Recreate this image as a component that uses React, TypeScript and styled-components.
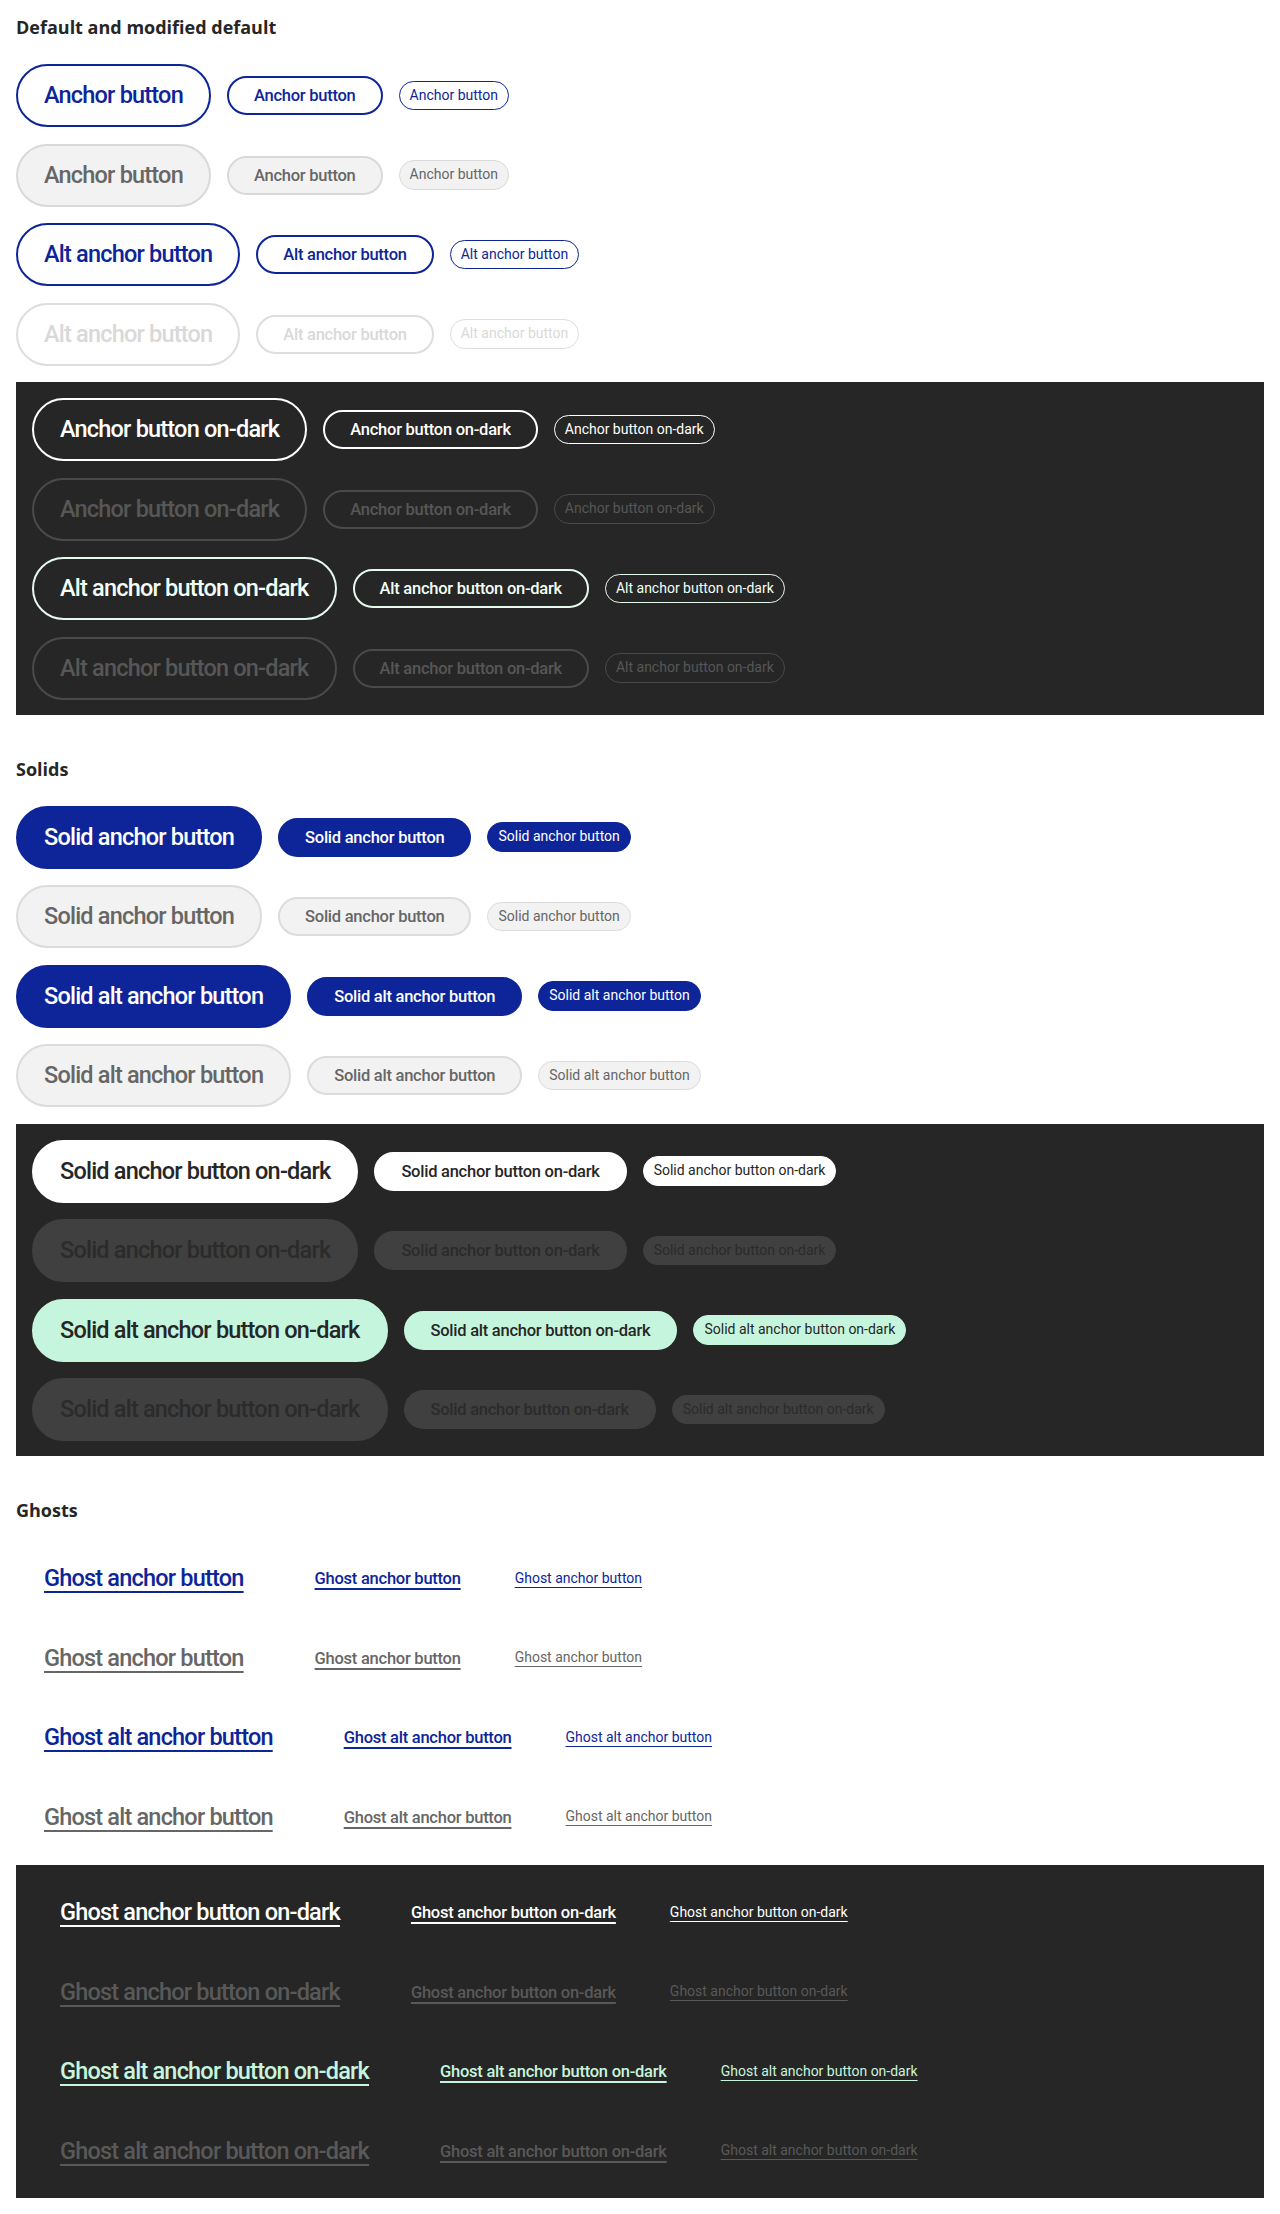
import React from 'react';
import styled, { createGlobalStyle, css } from 'styled-components';

type Size = 'lg' | 'md' | 'sm';

interface Tone {
  fg: string;
  bg: string;
  line: string;
  ghost?: boolean;
}

interface RowSpec {
  tone: Tone;
  labels: [string, string, string];
}

interface SectionSpec {
  title: string;
  light: RowSpec[];
  dark: RowSpec[];
}

const BLUE = '#0d2598';
const MINT = '#c6f5dd';

const GlobalStyle = createGlobalStyle`
  body {
    margin: 0;
    background: #ffffff;
    font-family: Roboto, "Liberation Sans", Arial, sans-serif;
  }
`;

const Page = styled.main`
  padding: 15px 16px 18px;
`;

const Section = styled.section`
  margin-bottom: 42px;

  &:last-child {
    margin-bottom: 0;
  }
`;

const Heading = styled.h2`
  margin: 0 0 24.5px;
  font-family: "Open Sans", "Noto Sans", sans-serif;
  font-size: 18px;
  font-weight: 700;
  line-height: 24.5px;
  color: #262626;
`;

const Stack = styled.div`
  display: flex;
  flex-direction: column;
  gap: 16.5px;
  margin-bottom: 16.5px;
`;

const DarkPanel = styled.div`
  display: flex;
  flex-direction: column;
  gap: 16.5px;
  padding: 16px 16px 15px;
  background: #262626;
`;

const Row = styled.div`
  display: flex;
  align-items: center;
  gap: 16px;
`;

const sizes = {
  lg: css`
    padding: 14px 26px;
    border-width: 2px;
    font-size: 23.5px;
    font-weight: 500;
    letter-spacing: -0.8px;
    line-height: 31px;
    text-decoration-thickness: 2px;
    text-underline-offset: 5px;
  `,
  md: css`
    padding: 6px 25px;
    border-width: 2px;
    font-size: 16.5px;
    font-weight: 500;
    letter-spacing: -0.25px;
    line-height: 23px;
    text-decoration-thickness: 1.5px;
    text-underline-offset: 4px;
  `,
  sm: css`
    padding: 4px 10px;
    border-width: 1.5px;
    font-size: 14px;
    font-weight: 400;
    letter-spacing: 0;
    line-height: 19.5px;
    text-decoration-thickness: 1px;
    text-underline-offset: 4px;
  `,
};

const Button = styled.a<{ $size: Size; $tone: Tone }>`
  display: inline-block;
  flex: none;
  border-style: solid;
  border-radius: 999px;
  font-family: Roboto, "Liberation Sans", Arial, sans-serif;
  white-space: nowrap;
  cursor: pointer;
  ${({ $size }) => sizes[$size]}
  color: ${({ $tone }) => $tone.fg};
  background: ${({ $tone }) => $tone.bg};
  border-color: ${({ $tone }) => $tone.line};
  text-decoration-line: ${({ $tone }) => ($tone.ghost ? 'underline' : 'none')};
`;

const outline = (fg: string, line: string, bg = 'transparent'): Tone => ({ fg, bg, line });
const solid = (fg: string, bg: string, line = bg): Tone => ({ fg, bg, line });
const ghost = (fg: string): Tone => ({ fg, bg: 'transparent', line: 'transparent', ghost: true });

const same = (label: string): [string, string, string] => [label, label, label];

const sections: SectionSpec[] = [
  {
    title: 'Default and modified default',
    light: [
      { tone: outline(BLUE, BLUE, '#ffffff'), labels: same('Anchor button') },
      { tone: outline('#666666', '#d9d9d9', '#f2f2f2'), labels: same('Anchor button') },
      { tone: outline(BLUE, BLUE, '#ffffff'), labels: same('Alt anchor button') },
      { tone: outline('#d9d9d9', '#dedede', '#ffffff'), labels: same('Alt anchor button') },
    ],
    dark: [
      { tone: outline('#ffffff', '#ffffff'), labels: same('Anchor button on-dark') },
      { tone: outline('#575757', '#4a4a4a'), labels: same('Anchor button on-dark') },
      { tone: outline('#f2fff7', '#e6f9ed'), labels: same('Alt anchor button on-dark') },
      { tone: outline('#575757', '#4a4a4a'), labels: same('Alt anchor button on-dark') },
    ],
  },
  {
    title: 'Solids',
    light: [
      { tone: solid('#ffffff', BLUE), labels: same('Solid anchor button') },
      { tone: solid('#666666', '#f2f2f2', '#dcdcdc'), labels: same('Solid anchor button') },
      { tone: solid('#ffffff', BLUE), labels: same('Solid alt anchor button') },
      { tone: solid('#666666', '#f2f2f2', '#dcdcdc'), labels: same('Solid alt anchor button') },
    ],
    dark: [
      { tone: solid('#262626', '#ffffff'), labels: same('Solid anchor button on-dark') },
      { tone: solid('#2b2b2b', '#404040'), labels: same('Solid anchor button on-dark') },
      { tone: solid('#262626', MINT), labels: same('Solid alt anchor button on-dark') },
      {
        tone: solid('#2b2b2b', '#404040'),
        labels: [
          'Solid alt anchor button on-dark',
          'Solid anchor button on-dark',
          'Solid alt anchor button on-dark',
        ],
      },
    ],
  },
  {
    title: 'Ghosts',
    light: [
      { tone: ghost(BLUE), labels: same('Ghost anchor button') },
      { tone: ghost('#666666'), labels: same('Ghost anchor button') },
      { tone: ghost(BLUE), labels: same('Ghost alt anchor button') },
      { tone: ghost('#666666'), labels: same('Ghost alt anchor button') },
    ],
    dark: [
      { tone: ghost('#ffffff'), labels: same('Ghost anchor button on-dark') },
      { tone: ghost('#595959'), labels: same('Ghost anchor button on-dark') },
      { tone: ghost(MINT), labels: same('Ghost alt anchor button on-dark') },
      { tone: ghost('#595959'), labels: same('Ghost alt anchor button on-dark') },
    ],
  },
];

const sizeOrder: Size[] = ['lg', 'md', 'sm'];

const ButtonRow: React.FC<{ row: RowSpec }> = ({ row }) => (
  <Row>
    {sizeOrder.map((size, i) => (
      <Button key={size} href="#" $size={size} $tone={row.tone} onClick={(e) => e.preventDefault()}>
        {row.labels[i]}
      </Button>
    ))}
  </Row>
);

export default function App() {
  return (
    <>
      <GlobalStyle />
      <Page>
        {sections.map((section) => (
          <Section key={section.title}>
            <Heading>{section.title}</Heading>
            <Stack>
              {section.light.map((row, i) => (
                <ButtonRow key={i} row={row} />
              ))}
            </Stack>
            <DarkPanel>
              {section.dark.map((row, i) => (
                <ButtonRow key={i} row={row} />
              ))}
            </DarkPanel>
          </Section>
        ))}
      </Page>
    </>
  );
}
